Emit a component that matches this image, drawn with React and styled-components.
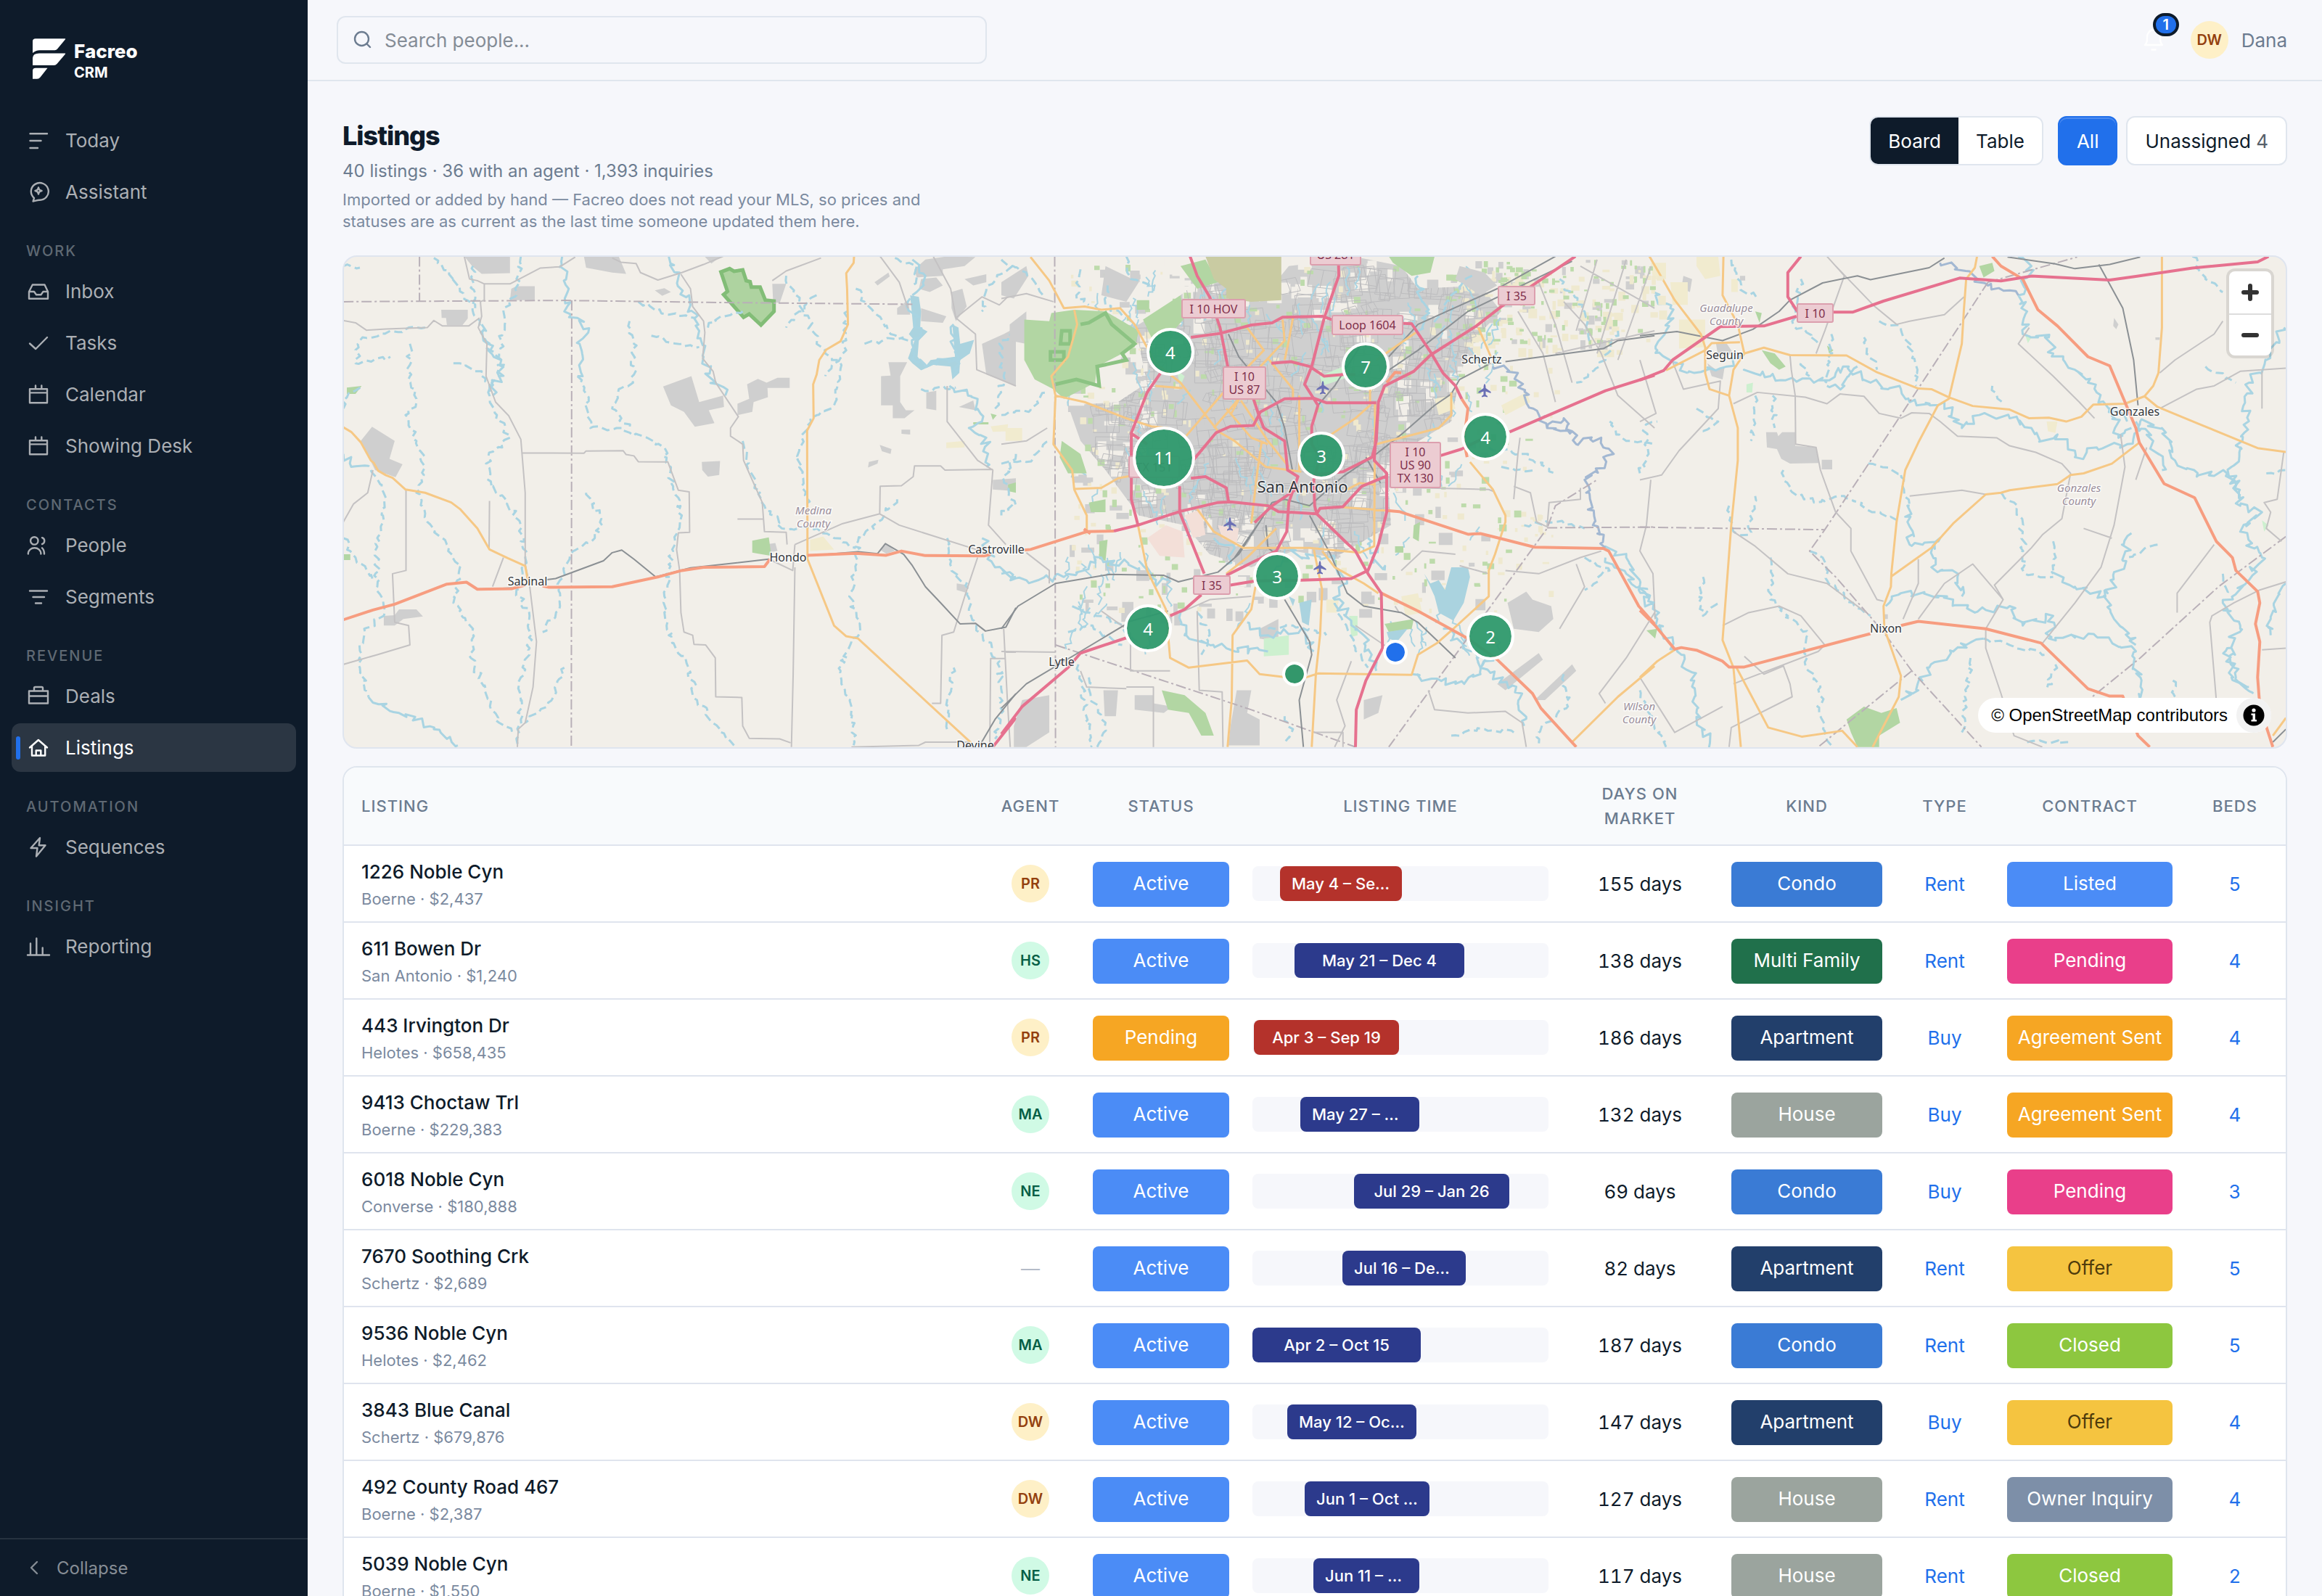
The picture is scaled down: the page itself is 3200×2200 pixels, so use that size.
import React from 'react';
import { useState } from 'react';
import styled, { createGlobalStyle } from 'styled-components';

const GlobalStyle = createGlobalStyle`
  * {
    box-sizing: border-box;
  }
  body {
    margin: 0;
    background: #f6f7fb;
    color: #0e1b2a;
    font-family: Inter, 'Liberation Sans', sans-serif;
    font-size: 26px;
  }
  button, input {
    font: inherit;
    color: inherit;
  }
  a {
    color: inherit;
    text-decoration: none;
  }
`;

/* ---------- shell ---------- */

const Shell = styled.div`
  display: grid;
  grid-template-columns: 424px minmax(0, 1fr);
  grid-template-rows: minmax(0, 1fr);
  height: 100vh;
  overflow: hidden;
`;

const Sidebar = styled.aside`
  display: flex;
  flex-direction: column;
  min-height: 0;
  background: #0e1b2a;
  color: #abafb4;
`;

const Brand = styled.a`
  display: flex;
  flex: none;
  align-items: flex-start;
  gap: 10px;
  height: 160px;
  padding: 48px 44px 0;
  color: #fff;
`;

const BrandName = styled.span`
  display: flex;
  flex-direction: column;
  padding-top: 8px;
  font-size: 26px;
  font-weight: 800;
  line-height: 30px;
`;

const BrandSub = styled.span`
  font-size: 20px;
  font-weight: 700;
  line-height: 28px;
`;

const Nav = styled.nav`
  display: flex;
  flex: 1;
  flex-direction: column;
  gap: 4px;
  min-height: 0;
  padding: 0 16px;
`;

const NavLabel = styled.div`
  padding: 32px 20px 6px;
  font-size: 20px;
  font-weight: 500;
  line-height: 24px;
  letter-spacing: 2px;
  color: #5f6973;
`;

const NavItem = styled.a`
  position: relative;
  display: flex;
  align-items: center;
  gap: 20px;
  height: 67px;
  padding: 0 20px;
  border-radius: 12px;
  background: ${({ $active }) => ($active ? '#2b3643' : 'transparent')};
  color: ${({ $active }) => ($active ? '#fff' : 'inherit')};

  &::before {
    content: '';
    display: ${({ $active }) => ($active ? 'block' : 'none')};
    position: absolute;
    left: 6px;
    width: 6px;
    height: 32px;
    border-radius: 3px;
    background: #2170eb;
  }
`;

const Collapse = styled.button`
  display: flex;
  flex: none;
  align-items: center;
  gap: 20px;
  height: 80px;
  padding: 0 36px;
  border: 0;
  border-top: 2px solid #26323f;
  background: none;
  color: #868d95;
  font-size: 24px;
`;

const Main = styled.main`
  display: flex;
  flex-direction: column;
  min-width: 0;
  min-height: 0;
`;

const TopBar = styled.header`
  display: flex;
  flex: none;
  align-items: center;
  justify-content: space-between;
  height: 112px;
  padding: 0 48px 0 40px;
  border-bottom: 2px solid #e0e6ee;
`;

const SearchBox = styled.label`
  display: flex;
  align-items: center;
  gap: 16px;
  width: 896px;
  height: 66px;
  padding: 0 20px;
  border: 2px solid #e0e6ee;
  border-radius: 12px;
  color: #6c7c90;
`;

const SearchInput = styled.input`
  flex: 1;
  padding: 0;
  border: 0;
  outline: 0;
  background: none;

  &::placeholder {
    color: #848c96;
    opacity: 1;
  }
`;

const UserArea = styled.div`
  display: flex;
  align-items: center;
  color: #6c7c90;
`;

const BellButton = styled.button`
  position: relative;
  display: flex;
  align-items: center;
  justify-content: center;
  width: 44px;
  height: 44px;
  margin-right: 28px;
  padding: 0;
  border: 0;
  background: none;
  color: #fff;
`;

const BellCount = styled.span`
  position: absolute;
  top: -15px;
  left: 20px;
  display: flex;
  align-items: center;
  justify-content: center;
  width: 36px;
  height: 32px;
  border: 4px solid #0e1b2a;
  border-radius: 16px;
  background: #2170eb;
  font-size: 20px;
  font-weight: 600;
`;

const avatarTones = {
  amber: ['#fef0c7', '#93400e'],
  mint: ['#d0fae5', '#065f46'],
};

const Avatar = styled.span`
  display: inline-flex;
  align-items: center;
  justify-content: center;
  width: 52px;
  height: 52px;
  border-radius: 50%;
  background: ${({ $tone }) => avatarTones[$tone][0]};
  color: ${({ $tone }) => avatarTones[$tone][1]};
  font-size: 20px;
  font-weight: 600;
  vertical-align: middle;
`;

const UserName = styled.span`
  margin-left: 18px;
`;

/* ---------- page ---------- */

const Page = styled.div`
  flex: 1;
  min-height: 0;
  padding: 48px 48px 0;
  overflow: hidden;
`;

const PageHead = styled.div`
  display: flex;
  align-items: flex-start;
  justify-content: space-between;
  margin-bottom: 32px;
`;

const Title = styled.h1`
  margin: 0 0 2px;
  font-size: 36px;
  font-weight: 800;
  line-height: 54px;
  letter-spacing: -1px;
`;

const Summary = styled.p`
  margin: 0 0 4px;
  font-size: 24px;
  line-height: 40px;
  color: #6c7c90;
`;

const FinePrint = styled.p`
  max-width: 840px;
  margin: 0;
  font-size: 22px;
  line-height: 30px;
  color: #7b8a9f;
`;

const Filters = styled.div`
  display: flex;
  gap: 12px;
`;

const Toggle = styled.div`
  display: flex;
  height: 68px;
  margin-right: 8px;
  overflow: hidden;
  border: 2px solid #e0e6ee;
  border-radius: 12px;
`;

const ToggleButton = styled.button`
  padding: 0 24px;
  border: 0;
  background: ${({ $on }) => ($on ? '#0e1b2a' : '#fff')};
  color: ${({ $on }) => ($on ? '#fff' : '#0e1b2a')};
`;

const FilterButton = styled.button`
  height: 68px;
  padding: 0 24px;
  border: 2px solid ${({ $on }) => ($on ? '#2170eb' : '#e0e6ee')};
  border-radius: 12px;
  background: ${({ $on }) => ($on ? '#2170eb' : '#fff')};
  box-shadow: ${({ $on }) => ($on ? 'inset 0 2px 0 #4d8cf0' : 'none')};
  color: ${({ $on }) => ($on ? '#fff' : '#0e1b2a')};
`;

const FilterCount = styled.span`
  color: #56606a;
`;

/* ---------- map ---------- */

const MapCard = styled.section`
  position: relative;
  height: 680px;
  margin-bottom: 24px;
  overflow: hidden;
  border: 2px solid #dfe5ef;
  border-radius: 20px;
  background: #f2efe9;
`;

const MapCanvas = styled.svg`
  display: block;
  width: 100%;
  height: 100%;
  font-family: 'Noto Sans', sans-serif;
`;

const Marker = styled.button`
  position: absolute;
  display: flex;
  align-items: center;
  justify-content: center;
  width: ${({ $size }) => $size}px;
  height: ${({ $size }) => $size}px;
  padding: 0;
  border: 4px solid #fff;
  border-radius: 50%;
  background: ${({ $color }) => $color};
  background-clip: padding-box;
  color: #fff;
  font-family: 'Noto Sans', sans-serif;
  font-size: 24px;
  transform: translate(-50%, -50%);
`;

const ZoomControls = styled.div`
  position: absolute;
  top: 20px;
  right: 20px;
  display: flex;
  flex-direction: column;
  border-radius: 8px;
  background: #fff;
  box-shadow: 0 0 0 4px rgba(0, 0, 0, 0.1);
`;

const ZoomButton = styled.button`
  display: flex;
  align-items: center;
  justify-content: center;
  width: 58px;
  height: 58px;
  padding: 0;
  border: 0;
  background: none;

  & + & {
    border-top: 2px solid #ddd;
  }
`;

const Attribution = styled.div`
  position: absolute;
  right: 20px;
  bottom: 20px;
  display: flex;
  align-items: center;
  gap: 12px;
  height: 48px;
  padding-left: 18px;
  border-radius: 24px;
  background: #fff;
  color: #000;
  font-family: 'Liberation Sans', Arial, sans-serif;
  font-size: 24px;
`;

const InfoButton = styled.button`
  display: flex;
  align-items: center;
  justify-content: center;
  width: 48px;
  height: 48px;
  padding: 0;
  border: 0;
  border-radius: 50%;
  background: #f2f2f2;
`;

/* ---------- table ---------- */

const TableCard = styled.section`
  overflow: hidden;
  border: 2px solid #dfe5ee;
  border-radius: 20px;
  background: #fff;
`;

const Table = styled.table`
  width: 100%;
  border-collapse: separate;
  border-spacing: 0;
  table-layout: fixed;
`;

const Col = styled.col`
  width: ${({ $width }) => ($width ? `${$width}px` : 'auto')};
`;

const HeadCell = styled.th`
  height: 108px;
  padding: 0 24px;
  border-bottom: 2px solid #dfe4ee;
  background: #f8fafc;
  color: #6c7c90;
  font-size: 22px;
  font-weight: 500;
  line-height: 34px;
  letter-spacing: 1px;
  text-align: ${({ $left }) => ($left ? 'left' : 'center')};
`;

const Cell = styled.td`
  height: 106px;
  padding: 0 ${({ $left }) => ($left ? 24 : 16)}px;
  border-bottom: 2px solid #dfe4ee;
  text-align: ${({ $left }) => ($left ? 'left' : 'center')};
  font-variant-numeric: ${({ $tabular }) => ($tabular ? 'tabular-nums' : 'normal')};
`;

const Address = styled.a`
  display: block;
  padding-top: 2px;
  font-weight: 500;
  line-height: 40px;
`;

const Place = styled.span`
  display: block;
  font-size: 22px;
  line-height: 34px;
  color: #7b8a9f;
`;

const Nobody = styled.span`
  color: #b4bcc8;
`;

const Pill = styled.span`
  display: block;
  height: 62px;
  margin-top: 2px;
  border-radius: 8px;
  background: ${({ $color }) => $color};
  color: ${({ $dark }) => ($dark ? '#4f3c0c' : '#fff')};
  line-height: 60px;
  white-space: nowrap;
`;

const Track = styled.div`
  height: 48px;
  overflow: hidden;
  border-radius: 8px;
  background: #f6f7fb;
`;

const Span = styled.div`
  height: 48px;
  padding: 0 ${({ $short }) => ($short ? 16 : 0)}px;
  overflow: hidden;
  border-radius: 8px;
  background: ${({ $late }) => ($late ? '#b4322b' : '#2c3a8c')};
  color: #fff;
  font-size: 22px;
  font-weight: 500;
  line-height: 48px;
  text-align: ${({ $short }) => ($short ? 'left' : 'center')};
  white-space: nowrap;
`;

const CellLink = styled.a`
  color: #2170eb;
`;

/* ---------- icons ---------- */

const iconPaths = {
  today: 'M5.5 7.2H29M5.5 17H20.5M5.5 27H16',
  assistant:
    'M9.6 29.6L11 24.9A12 11.8 0 1 1 18 27.7C15 27.8 12.5 29.2 9.6 29.6ZM17 10.5Q17.6 14.4 21.5 15Q17.6 15.6 17 19.5Q16.4 15.6 12.5 15Q16.4 14.4 17 10.5Z',
  inbox: 'M8.8 7.5H25.5L30 17V26.8H4V17ZM4 17H11L14 21.2H20.5L23.5 17H30',
  tasks: 'M5 17.5L13.2 25L29 9',
  calendar: 'M5 9.2H29V28.2H5ZM5 14.4H29M13 4.5V9M21.3 4.5V9',
  people:
    'M16.5 10.4A5.2 5.2 0 1 1 6.1 10.4A5.2 5.2 0 1 1 16.5 10.4M2.8 28.5C3 17.5 20.2 17.5 20.4 28.5M22 6.2A4.6 4.6 0 0 1 22 15M22 20.3C24 22 25 25 25 28.5',
  segments: 'M5 8.5H29M9.5 17H25M13 25.5H21',
  deals: 'M4 9.5H30V26.5H4ZM4 16.5H30M11 9V5.5Q11 4 12.5 4H21.5Q23 4 23 5.5V9',
  home: 'M5 16.5L16.9 6L29 16.5M8 14.5V27.5H26.2V14.5M13.7 27V20.5H20.3V27',
  bolt: 'M19 4L6.5 18H15.5L14 29.5L26.5 14.2H17.7Z',
  chart: 'M2 28.5H32M6 28V12.5M14.3 28V5.5M22.7 28V18.5',
};

const Icon = ({ name }) => (
  <svg width="34" height="34" viewBox="0 0 34 34" fill="none" stroke="currentColor" strokeWidth="2.4" strokeLinecap="round" strokeLinejoin="round" aria-hidden="true">
    <path d={iconPaths[name]} />
  </svg>
);

const Logo = () => (
  <svg width="48" height="64" viewBox="0 0 48 64" fill="#fff" aria-hidden="true">
    <path d="M1 25V9Q1 5.3 5 5.3H45.5Q46.8 5.3 45.8 6.5L35 19.5Q33.6 21.3 31.5 21.3H11Q5 21.5 1 25Z" />
    <path d="M1 42V32Q1.5 25.6 10 25.6H45.5Q46.8 25.6 45.8 26.8L34.5 40Q32.8 42 30.5 42H1Z" />
    <path d="M1 60.8V49Q1.5 45.8 5 45.8H21.5L11.5 58.5Q9.8 60.8 7 60.8Z" />
  </svg>
);

/* ---------- map drawing ---------- */

// small seeded generator so the drawing is the same on every render
const seeded = (seed) => () => {
  seed = (seed * 16807) % 2147483647;
  return seed / 2147483647;
};

const parse = (line) => line.split(' ').map((p) => p.split(',').map(Number));

const straight = (line) => 'M' + line.split(' ').join('L');

// turns a coarse line into a winding creek
const meander = (line, seed, amp = 9) => {
  const rand = seeded(seed * 7919 + 13);
  const pts = parse(line);
  let d = `M${pts[0][0]} ${pts[0][1]}`;
  for (let i = 1; i < pts.length; i++) {
    const [x0, y0] = pts[i - 1];
    const [x1, y1] = pts[i];
    const steps = Math.max(2, Math.round(Math.hypot(x1 - x0, y1 - y0) / 11));
    for (let s = 1; s <= steps; s++) {
      const t = s / steps;
      const j = s === steps ? 0 : amp;
      d += `L${Math.round(x0 + (x1 - x0) * t + (rand() - 0.5) * j * 2)} ${Math.round(y0 + (y1 - y0) * t + (rand() - 0.5) * j * 2)}`;
    }
  }
  return d;
};

const west = {
  urban: [
    '300,30 405,30 405,82 340,84 318,60', '575,30 655,30 672,84 640,80 580,65', '420,122 462,122 462,165 405,165 408,130',
    '247,195 308,195 308,222 296,242 260,242 258,220 248,220', '88,556 140,600 128,655 158,672 142,712 95,690 62,600',
    '757,432 822,400 840,480 895,460 897,495 862,505 875,545 830,556 805,510 775,490',
    '950,425 975,408 995,420 1020,405 1048,405 1048,436 997,436 998,465 965,480 962,510 928,520 928,485 955,470',
    '1275,357 1318,357 1302,400 1302,480 1315,505 1335,505 1312,530 1285,530 1285,490 1258,490 1258,400 1280,398',
    '1362,450 1385,445 1385,505 1362,500', '1490,300 1540,270 1568,250 1568,430 1500,395', '846,665 888,662 886,705 860,710 847,690',
    '1360,40 1410,30 1475,32 1450,60 1400,70 1400,90 1340,95 1335,70', '1350,100 1385,95 1400,120 1370,140 1345,130',
    '1420,140 1445,130 1455,185 1430,230 1420,190', '1450,100 1500,85 1500,110 1470,120', '1350,190 1408,215 1400,235 1350,230',
    '115,1140 140,1138 150,1120 190,1120 205,1142 160,1150 140,1170 115,1170', '1008,115 1040,115 1025,175 1010,170',
    '1437,495 1470,475 1475,505', '1243,110 1275,80 1278,92 1250,120', '1295,190 1320,165 1325,210 1295,210', '738,135 760,128 775,140 755,152',
    '1305,565 1325,565 1325,580 1305,578', '1255,612 1282,625 1280,640 1260,632', '1230,665 1252,658 1250,670 1228,682', '1515,720 1568,715 1568,755 1515,750',
    '852,30 890,30 868,52', '1255,935 1270,917 1290,940 1270,948', '1432,1040 1455,1045 1452,1068 1432,1060', '990,920 1015,915 1020,940 995,945',
  ],
  wood: ['962,908 1000,898 1006,955 962,945', '22,950 38,950 38,968 22,968', '1470,542 1505,542 1505,549 1470,549', '30,435 64,430 50,455 30,455', '1510,515 1524,520 1515,535', '1550,735 1568,728 1568,760 1550,755'],
  farm: ['1408,605 1450,600 1450,620 1408,622', '1095,905 1125,895 1150,935 1095,940', '1510,555 1550,548 1548,570 1515,572'],
  lake: ['1325,150 1345,155 1350,200 1348,250 1365,262 1345,290 1342,340 1360,370 1372,350 1400,345 1428,340 1422,240 1436,250 1440,300 1472,288 1462,330 1440,350 1438,390 1422,410 1418,370 1378,365 1350,382 1330,360 1320,345 1335,290 1322,270 1332,250'],
  motorway: ['1568,1455 1515,1545'],
  trunk: ['22,1152 90,1122 140,1104 260,1042 305,1036 330,1058 410,1056 440,1045', '480,1048 495,1052 640,1050 745,1020 800,1000 850,990 990,988 1003,965', '1089,953 1200,947 1270,953 1305,940 1360,954 1495,955 1510,950'],
  primary: [
    '22,558 40,572 62,604 85,660 92,668 102,692 120,706 135,714 165,750 210,760 270,790 290,810 330,870 358,935 400,962 440,986 448,1045',
    '1196,30 1195,50 1178,82 1180,130 1182,240 1165,292 1132,318 1116,350 1110,395 1102,425 1103,530 1088,568 1089,965 1150,1170 1178,1203 1205,1210 1465,1532',
  ],
  minor: [
    '300,30 312,100 330,105 346,115 405,115 475,66 520,62 555,32',
    '346,115 346,165 337,170 340,215 332,250 352,300 350,400 372,480 402,522 430,595 440,760 440,980 450,1045 466,1220 458,1360 440,1470 424,1490 422,1545',
    '432,637 575,638 580,631 665,630 672,642 690,646 700,664 768,665 792,752 817,757 818,882 792,884 788,935 795,1000 798,1130 805,1190 825,1200 828,1228 855,1230 877,1270 878,1390 938,1392 940,1480 955,1518 1025,1520 1050,1532',
    '640,35 660,48 695,52 705,80 745,103 800,80 850,55 895,30',
    '798,85 820,130 825,185 850,230 853,265 848,345 872,385 878,420 930,525 912,560 912,585 940,610 942,660 965,730 985,790 990,880 1040,882 1042,920',
    '1060,990 1056,1320 1052,1545', '1060,920 1110,890 1170,855 1255,825 1256,740 1305,738 1332,710 1335,677 1395,677 1405,690 1515,688',
    '1255,825 1300,860 1500,945', '22,228 50,235 75,258 120,254 215,250 230,228 250,245 310,245 335,220',
    '166,750 166,1000 135,1010 140,1160 172,1170 175,1230 100,1260 22,1290', '22,850 45,795 78,760 90,690', '358,785 357,930',
    '1256,30 1300,110 1320,190', '1568,1252 1545,1252', '1542,1272 1510,1272 1508,1545', '1480,960 1455,1060 1425,1190 1398,1200 1395,1410 1375,1410',
    '1190,1545 1345,1540 1360,1530 1460,1530', '1378,30 1418,130 1430,220 1475,270 1478,380 1568,430', '1430,220 1490,155 1530,180 1568,130',
    '1410,430 1410,540 1480,660 1515,690 1505,860 1545,920', '928,841 988,841', '1008,105 1040,75 1120,35', '365,1050 390,960', '1000,965 1055,1000 1060,920', '1540,1180 1548,1390 1555,1545',
  ],
  rail: [
    '22,1152 90,1122 140,1104 260,1042 305,1036 330,1058 410,1054', '490,1028 510,1025 620,970 640,945 662,937 690,965 740,1020 820,992 1000,965',
    '1089,955 1205,942 1250,948 1268,917 1310,950 1330,985 1360,1050 1395,1100 1440,1165 1475,1163 1498,1187 1545,1175 1568,1115', '1568,1380 1520,1460 1485,1540',
  ],
  county: ['22,170 530,166 860,172 1330,178', '197,30 197,168', '547,166 546,1545'],
  creek: [
    '230,35 265,85 300,150 325,190', '430,30 420,150 390,200 385,290 380,340', '320,60 320,180 335,240 360,320 385,350 380,400 355,450 375,520 405,590 355,650 355,720 400,790 430,860 440,960 420,1060 450,1140 450,1240 430,1330 430,1460 420,1545',
    '560,400 578,450 590,560 650,560 720,590 760,620 780,740 800,830 780,940 760,1080 770,1200 810,1280 835,1400 870,1470 920,1540',
    '680,230 690,300 688,420 655,440 640,500 680,560', '175,300 175,400 190,480 165,520 190,600 210,680 190,760 215,850 260,920 290,990 275,1100 320,1180 315,1270 350,1370 380,1470 410,1500',
    '210,250 130,260 60,290 50,360 130,340', '22,500 35,450 64,430', '85,690 120,780 100,900 100,1050 115,1140 70,1180 60,1300 80,1390',
    '580,760 615,840 600,900 550,940 520,1030 520,1110 480,1190', '530,1300 505,1390 440,1470', '1040,90 1070,170 1100,260 1130,330 1165,360 1150,490 1095,530 1070,620 1075,740 1090,790',
    '1200,130 1240,200 1280,270 1320,290', '1220,300 1310,280', '940,600 960,700 990,800 1030,870 1110,870 1150,900 1200,930', '1295,780 1250,850 1205,910 1200,1000 1185,1080 1210,1180 1180,1250 1165,1310 1190,1430 1195,1540',
    '1410,900 1420,990 1460,1060 1465,1140 1500,1220 1530,1280 1535,1440 1520,1520', '1425,1300 1410,1400 1415,1500', '1568,640 1540,720 1568,800', '700,170 770,210 830,220', '730,275 800,300 840,310', '275,360 340,385 360,450',
    '1350,440 1430,435', '1110,150 1070,200 1040,250', '1180,200 1170,330 1130,400', '22,60 60,65', '22,900 50,960 90,1030', '860,250 890,215 940,200', '1290,35 1340,60 1330,120', '1560,60 1500,130 1490,200', '1568,260 1530,300 1540,400 1520,500',
  ],
  river: [
    '525,30 540,130 530,200 560,220 585,265 565,300 560,400', '80,1390 150,1440 230,1490 285,1540', '22,640 40,680 80,675', '770,30 795,80 820,180 840,260 850,340 870,420 900,460',
    '1415,430 1480,470 1490,540 1460,560 1500,590 1500,680', '1490,900 1520,990 1568,1020', '340,240 360,320 385,350 380,400 365,460', '1330,40 1360,90 1330,150',
    '1325,160 1340,250 1335,330 1360,365 1430,350', '1425,240 1432,320 1425,400',
  ],
};

const centre = {
  urban: [
    '50,1400 115,1385 115,1500 60,1545 30,1545 30,1480', '245,1370 280,1370 275,1450 248,1450', '320,1385 365,1385 365,1410 410,1420 390,1440 320,1430', '565,1370 600,1370 590,1440 620,1460 620,1540 545,1540 550,1480',
    '1215,1100 1260,1065 1275,1090 1320,1110 1325,1150 1290,1190 1230,1180', '1190,1350 1290,1255 1300,1275 1210,1370', '1280,1400 1370,1290 1380,1310 1305,1400',
    '870,1400 915,1385 905,1440 870,1460', '620,1180 665,1150 665,1220 620,1210', '1100,60 1160,80 1190,120 1150,150 1090,100', '0,110 60,60 65,90 30,160 0,150', '20,240 60,200 60,300 20,290', '250,60 330,110 300,170 240,150',
  ],
  wood: [
    '55,225 115,230 120,205 175,195 250,200 330,260 320,310 230,370 225,420 150,470 125,440 80,410 55,350', '145,600 190,640 205,700 160,700 140,650', '930,30 1040,30 1030,80 985,90 940,50',
    '325,165 355,165 355,195 325,195', '340,225 430,150 440,220 400,280 360,280', '210,790 250,780 250,820 215,820', '385,1370 440,1385 490,1440 510,1510 480,1510 450,1440 400,1430', '920,1165 990,1150 985,1180 930,1190',
    '990,860 1005,850 1002,910 988,900', '235,910 255,905 250,970 235,965', '945,925 965,925 965,945 945,945', '430,60 490,40 520,110 470,130',
  ],
  pale: ['630,1210 690,1200 690,1260 630,1265', '835,1140 855,1140 855,1200 840,1205', '765,400 820,370 840,400 770,430', '420,380 440,400 430,430'],
  farm: ['960,1080 1000,1070 1010,1130 970,1140', '1200,490 1260,450 1270,480 1210,520', '10,560 50,560 50,600 10,600', '780,1090 810,1090 805,1130 780,1130', '1040,470 1080,460 1090,500 1050,520'],
  base: ['350,900 395,860 435,880 440,960 380,955', '440,830 480,810 490,890 460,900', '520,860 570,870 565,920 530,900'],
  lake: ['1015,1010 1030,1040 1050,1030 1065,1060 1080,990 1120,990 1125,1020 1110,1100 1085,1155 1050,1130 1040,1080', '715,1100 745,1090 738,1170 722,1160', '925,1190 975,1180 950,1220 930,1210', '690,1080 705,1090 700,1110'],
  motorway: [
    '809,30 810,90 775,220 745,370 728,425 760,490 745,555 745,610 765,650 750,720 752,800 757,825 825,910 850,940 880,1010 912,1070 915,1240 875,1340 852,1430 850,1545',
    '453,30 470,90 500,155 525,250 545,380 600,450 618,520 630,560 680,600 687,690 712,710 690,790 685,880 660,940 610,970 540,1015',
    '1378,30 1280,115 1200,185 1140,245 1030,335 990,385 920,430 905,480 900,600 890,650 820,695 750,705', '385,385 350,450 312,575 312,780 328,860',
    '455,280 525,268 600,242 650,235 675,218 770,215 800,228 985,238 1030,325 1060,390 1090,430 1105,470', '310,575 350,610', '460,660 515,575 550,555 605,552 622,510 680,470 750,468 780,482 900,482',
    '455,715 490,710 540,745 545,785', '428,740 428,820 487,1010', '550,1045 610,1032 720,1030 840,1025 880,1000 905,920 925,820 925,700 895,660 905,480', '648,360 695,355 740,370 775,400 820,395 850,395',
    '270,878 328,860 428,818 520,790 550,788 640,800 665,818 757,825 765,808 820,803 865,740 925,708', '1055,645 1105,625 1160,590', '1220,572 1450,445 1568,397',
    '480,1075 440,1120 405,1140', '300,1208 190,1255 160,1300 50,1420 0,1505', '608,852 650,800 712,745',
  ],
  trunk: [
    '55,937 70,935 205,880 270,878', '1105,470 1120,500 1110,600 1118,650', '925,815 955,818 1120,888 1150,886 1210,905 1280,928 1445,932 1458,940 1530,1110 1568,1165',
    '912,1070 1000,1125 1120,1210 1190,1275 1275,1380 1295,1425 1380,1545', '925,420 945,388 960,390', '198,872 214,886',
  ],
  primary: [
    '70,32 115,105 150,190 200,185 240,195 285,190 320,240 370,360 430,420 520,570 560,600 635,680 720,695', '175,195 182,240 160,340 120,400 130,460 125,610 170,690 175,750 205,830 205,880',
    '130,460 200,480 300,530 360,555 400,560', '175,748 240,745 280,715 310,708', '328,860 350,1000 395,1120 405,1270 450,1300 590,1278 620,1320 720,1335 760,1318 985,1322 1000,1260 1045,1225 1085,1180 1170,1080 1170,1000 1185,950 1210,850 1210,830 1180,750 1125,665',
    '590,250 630,320 540,440 480,530 440,590', '675,225 680,290 640,345 600,400 550,520', '640,345 700,440 700,470', '700,220 690,290 680,350', '715,460 715,690', '470,810 510,880 580,930 740,930 860,945 895,925 897,480',
    '600,855 615,690 625,600', '540,500 600,590 640,610', '570,470 510,560', '575,475 640,600 690,680', '750,935 770,1060 765,1200 755,1320 745,1545', '660,870 590,960 540,1010', '610,1050 600,1120 555,1200 553,1400 543,1545',
    '905,1070 870,1040 800,990 770,940', '995,265 900,350', '1145,250 1175,340', '885,440 885,490 850,530 780,590', '1080,450 1080,520 1050,560 900,610', '1568,1295 1480,1390 1370,1530', '370,430 435,437', '830,750 860,730 895,735', '820,805 925,815',
  ],
  minor: [
    '0,160 60,145 125,170', '0,610 60,600 110,560', '980,720 1010,745 1170,750 1180,755', '1230,780 1240,640 1245,590', '1230,740 1270,760 1285,850 1310,865 1315,790 1390,780 1390,745', '240,1125 300,1180', '300,1360 365,1360 365,1545',
    '190,1310 205,1360 300,1365', '0,1250 130,1252', '470,1125 475,1370 530,1375 532,1545', '1025,1370 1040,1430 1120,1440 1210,1435 1250,1470 1260,1545', '1568,1130 1500,1270 1435,1380 1450,1410', '945,1110 955,1130', '1210,1000 1290,1010 1390,960 1440,940',
    '60,945 115,1000 115,1040', '800,1545 825,1480 805,1400 840,1280', '1350,170 1400,240 1440,330 1480,460 1568,560', '1290,110 1330,240 1370,420', '1240,200 1300,330 1330,480', '960,1000 1010,940 1090,950', '1100,985 1170,1010',
    '600,1080 500,1090 430,1130', '850,1170 930,1240', '1380,980 1400,1050 1340,1180', '820,1545 820,1500 750,1500', '310,1190 310,1310 405,1310',
    '1390,60 1568,190', '1430,40 1380,260', '1500,40 1430,330', '1560,60 1480,350', '1330,330 1568,260',
  ],
  rail: [
    '0,1180 40,1110 130,1040 260,1012 390,1015 425,1035 520,1005 570,950 620,850 650,790 680,780 740,800 820,710 900,640 960,580 1040,490 1080,455 1100,410 1175,360', '1210,355 1445,315 1480,290 1568,275', '1330,30 1190,130 1000,240 930,340',
    '1370,45 1120,200 1000,320 920,390', '545,270 570,340 660,480 680,560 700,700', '740,830 790,950 830,1070 870,1110 960,1130 1000,1160 1090,1270', '680,1090 740,1220 745,1260 715,1400 725,1545', '300,1165 190,1250 60,1350 0,1425', '300,1160 400,1125',
    '860,310 800,430 760,490', '635,860 640,930 660,950', '875,650 910,730', '620,850 560,960',
  ],
  county: ['128,30 130,1545', '130,1230 600,1430 850,1545', '930,1545 1310,870 1330,800 1430,720', '1310,868 1568,866'],
  creek: [
    '0,40 60,80 100,150', '190,70 180,150 210,180', '255,120 250,180 300,220', '0,520 70,505 110,450', '0,670 60,665 120,600', '170,1110 260,1150 330,1230', '160,1190 210,1170 290,1230', '210,1330 215,1400 250,1470 230,1545', '185,1290 200,1400 215,1545',
    '640,1180 700,1170 780,1200', '800,1100 850,1240 880,1300', '1080,1510 1160,1490 1230,1500', '1350,1320 1360,1420 1290,1500 1290,1545', '1170,620 1250,640 1330,700', '1200,680 1280,690', '1460,540 1500,600 1568,610', '1255,860 1330,850 1400,870', '1400,960 1460,1000 1400,1060',
    '940,700 1000,740', '1480,260 1450,350 1380,420', '1340,100 1400,200 1420,300', '0,830 30,790', '470,1130 500,1200 480,1260', '300,30 310,100 370,120', '1130,90 1080,150 1040,240', '680,1450 700,1490 680,1530',
  ],
  river: [
    '0,1010 60,1030 150,1020 210,990 240,960 330,990', '330,970 370,1040 400,1030', '430,1130 440,1200 540,1240 640,1250', '590,1160 640,1200 720,1180 750,1250', '690,930 720,960 800,960 830,1040 800,1090 870,1200 900,1310', '880,900 890,960 920,1000',
    '1450,960 1500,1010 1550,1060', '1180,1270 1150,1300 1250,1380 1255,1480', '985,1320 1090,1350 1150,1320 1180,1270', '1120,1220 1150,1300', '1000,90 1020,200 1000,260', '1060,1180 1130,1250', '510,900 560,930 540,980',
    '1450,930 1500,960 1530,1060 1568,1100',
  ],
  bound: ['1180,370 1240,390 1260,480 1310,560 1370,570 1380,610 1440,590 1470,640 1400,720 1420,860 1450,930', '1310,560 1350,530 1370,570'],
};

const east = {
  urban: [
    '290,573 315,573 318,585 327,573 357,573 357,615 405,620 412,668 345,670 325,655 315,625 292,620', '418,658 442,658 442,688 418,688', '175,300 200,300 215,330 180,340', '155,360 175,380 195,370 190,410 165,400', '230,90 242,90 242,105 230,105', '1090,220 1100,240 1095,255 1088,245',
    '100,90 120,100 115,140 95,130', '1185,280 1195,280 1195,288 1185,288', '560,1135 570,1135 570,1150 560,1150',
  ],
  wood: ['780,60 810,50 815,75 790,95', '475,1460 515,1420 555,1440 590,1425 598,1470 550,1510 550,1545 500,1545 485,1500', '280,320 310,330 335,370 320,380 300,360', '15,1185 40,1180 35,1210', '265,200 280,205 275,235', '430,305 445,320 435,330'],
  pale: ['245,425 260,420 258,450 245,450', '885,270 900,280 892,298', '1430,845 1445,860 1435,880'],
  farm: ['25,50 60,50 60,100 30,100', '130,30 180,30 185,90 150,100 130,60', '90,225 150,225 150,310 90,315', '70,110 110,110 110,180 75,180', '935,540 960,540 955,575 938,570', '210,100 225,100 225,140 210,140'],
  motorway: ['0,412 55,382 75,350 185,247 285,245 360,215', '370,30 340,80 340,155 362,200', '445,202 490,202 560,168 735,97 830,106 900,91 1080,103 1140,92 1270,66 1420,47 1445,30'],
  trunk: [
    '810,30 830,60 880,100 915,195 960,245 1030,340 1080,368 1115,480 1140,560 1148,605 1205,732 1275,775 1325,910 1362,960 1370,1000 1420,1065 1425,1100 1415,1165 1425,1220 1420,1330 1425,1420 1455,1545',
    '0,1123 35,1170 80,1243 95,1238 130,1246 190,1280 205,1298 240,1298 530,1195', '600,1170 640,1157 795,1180 922,1224 1030,1365 1080,1388 1110,1388 1145,1510 1172,1545',
  ],
  primary: [
    '22,30 80,165 140,270 150,310 150,390 160,440 205,460 225,560 225,660 210,860 190,1215 215,1300 232,1545', '222,1300 295,1485 372,1513 465,1495 500,1545', '0,1330 40,1280 80,1245', '192,30 190,150 225,240 240,330 215,380 205,460', '60,382 150,320 165,298 230,295',
    '240,330 285,312 345,335 475,336 545,388 640,438 670,440 710,465 765,492 850,503 895,530 940,528 980,540 1015,525 1042,488 1115,485 1160,462 1190,495 1290,550 1420,622 1485,634',
    '775,30 770,65 750,100 745,190 740,300 710,470 685,490 640,605 610,690 590,850 578,1010 577,1050 560,1110 562,1180 600,1325 595,1390 535,1545', '1200,30 1200,250 1192,390 1180,430 1160,462',
    '578,1018 670,930 720,855 795,765 830,760 850,752 960,733 990,705 1020,700 1085,670 1148,605', '1485,1455 1455,1510',
  ],
  minor: [
    '0,350 37,515 0,540', '0,720 50,705 90,630 180,500 185,415 100,440 75,355', '25,720 15,860 0,940 30,1010 35,1150',
    '215,485 270,450 380,465 430,485 460,455 515,462 550,515 600,530 625,513 665,515 690,540 730,585 820,590 850,615 910,635 970,670 990,700 970,840 925,890 900,930 815,1045 835,1090 795,1180 795,1240 830,1380 860,1510 925,1545',
    '450,60 540,185 590,240 620,230 700,210 745,155', '345,335 348,380 357,460 358,610 405,620 415,690 450,820 485,870 485,940 545,1090 560,1095', '895,250 870,300 950,400 1010,480 1045,530', '1105,580 1115,680 1090,860 1060,990 1000,1100 925,1225',
    '620,770 740,752 795,765', '215,880 265,925 340,1010 430,1040 520,1130', '1485,375 1380,385 1320,430 1280,440 1230,475 1195,500', '1195,390 1230,350 1320,270 1340,230', '1485,1035 1425,1060 1365,1100 1315,1140 1310,1160 1325,1400',
    '1480,635 1465,780 1435,790 1450,820 1440,870 1475,910', '190,1170 250,1130 320,1110 370,1140 425,1230 410,1250 215,1350', '240,1265 285,1320 330,1295 345,1350 350,1390 210,1485 205,1545', '1430,385 1430,500', '640,965 640,1040 605,1150', '640,1150 700,1040 765,980 835,1090',
    '1320,920 1235,1070 1235,1130', '1020,870 1085,900', '430,30 470,90 425,260 405,330', '0,1330 80,1500 190,1420', '1485,1240 1430,1245', '1165,620 1140,720',
  ],
  rail: ['0,275 85,262 190,290 260,255 320,200 345,165 420,112 500,90 530,102 665,65 700,35', '845,32 955,53 1000,68 1080,55 1150,32', '1055,55 1110,190 1135,350 1145,490', '1485,1490 1455,1530'],
  county: ['0,866 425,874', '800,110 600,520 425,874 390,940 450,1020 560,1190 625,1310 785,1545', '625,1310 460,1490 410,1545', '800,110 1005,32', '1485,895 1330,1050 1150,1270 1040,1390'],
  creek: [
    '210,40 230,130 270,160', '525,670 600,700 620,800', '330,690 345,750 400,790 470,770 540,820 600,850', '205,800 215,880 250,890 265,770', '390,940 420,960 430,1030 490,1100 530,1140', '300,960 300,1090 350,1150 385,1200 380,1290 415,1360 415,1450 440,1540',
    '550,230 600,250 630,330 635,430', '0,700 20,640 10,560 40,540', '130,500 180,540 140,570', '145,1020 135,1100 145,1140 185,1100', '1190,920 1120,960', '830,760 860,790 880,880 885,1010 950,1020', '950,910 950,1000', '760,1270 750,1400 740,1500', '790,1210 850,1230 930,1260',
    '955,1290 935,1370', '265,460 255,600', '305,460 310,560', '370,360 390,400', '810,430 835,490', '1300,370 1370,420', '1340,1010 1350,1080', '1270,30 1300,100 1340,140', '1440,700 1485,690', '0,1370 60,1545', '370,100 350,230 410,300', '515,280 545,380', '890,1530 990,1530', '1225,1340 1230,1390', '440,270 430,420',
  ],
  river: [
    '870,30 900,60 870,150', '870,150 890,200 880,270 940,280 950,330 1000,380 1050,450 1080,500 1120,540', '240,380 300,400 400,420 480,370 530,420 600,440 620,480 700,480 740,560 780,520 850,530 900,560 920,600 960,580 1000,650 1050,620 1120,610 1150,540 1200,560 1230,660 1280,710 1350,700 1380,780',
    '1480,250 1440,350 1400,420 1385,600 1360,680 1380,800 1430,820 1380,880 1430,960 1400,1030 1340,1100 1380,1180 1350,1240 1360,1330 1410,1380', '620,800 620,920 690,900 670,990 730,1020 740,1080',
    '565,1110 600,1070 720,1090 770,1130 850,1110 880,1170 950,1140 940,1210 1050,1205 1140,1250 1150,1400', '1130,885 1110,970 1070,1080 1000,1050 950,1010', '1070,1080 1090,1150 1140,1230', '790,1210 720,1250 660,1300 640,1370 600,1400', '1485,1040 1450,1150 1450,1200',
    '0,1050 40,1150 60,1210 95,1260 125,1340 130,1440 160,1545', '30,140 70,190 60,260 40,320 110,390', '110,390 200,370 240,330',
    '1085,500 1100,590 1130,560', '1140,540 1180,600 1200,690', '500,370 470,430 430,430', '1360,1240 1370,1330 1400,1360',
  ],
  bound: ['690,50 760,80 800,120 870,150'],
};

const cityOutline =
  '200,250 330,240 380,200 450,130 560,90 620,170 690,60 860,34 960,60 1000,130 1150,120 1200,200 1130,290 1100,400 1080,540 950,640 930,760 935,860 800,960 700,940 600,990 500,950 440,860 330,830 250,690 190,600 160,490 280,480 350,420 330,300';

const patch = (x, y, w, h) => `M${x | 0} ${y | 0}h${w | 0}v${h | 0}h${-w | 0}z`;

// blocks, parks and street grids of the built-up area
const buildCity = () => {
  const rand = seeded(4242);
  const out = { holes: '', wood: '', farm: '', urban: '', streets: '', creeks: '' };
  for (let i = 0; i < 260; i++) {
    const a = rand() * Math.PI * 2;
    const r = 300 + rand() * 290;
    const x = 640 + Math.cos(a) * r;
    const y = 500 + Math.sin(a) * r * 1.05;
    if (y < 34 || y > 1100) continue;
    out.holes += patch(x, y, 8 + rand() * 30, 10 + rand() * 36);
  }
  for (let i = 0; i < 230; i++) {
    out.wood += patch(180 + rand() * 1080, 40 + rand() * 1080, 5 + rand() * 14, 6 + rand() * 18);
    out.farm += patch(150 + rand() * 1180, 60 + rand() * 1080, 5 + rand() * 12, 6 + rand() * 16);
    out.urban += patch(160 + rand() * 1000, 40 + rand() * 1100, 8 + rand() * 26, 10 + rand() * 30);
  }
  // suburbs and fields north-east of the city
  for (let i = 0; i < 100; i++) {
    const x = 1080 + rand() * 480;
    const y = 34 + rand() * 260;
    out.wood += patch(x, y, 4 + rand() * 12, 5 + rand() * 16);
    out.farm += patch(x + 20, y + 30, 6 + rand() * 16, 8 + rand() * 22);
    if (i % 2) out.urban += patch(x - 20, y, 6 + rand() * 18, 8 + rand() * 24);
  }
  for (let i = 0; i < 330; i++) {
    const x = 170 + rand() * 960;
    const y = 60 + rand() * 900;
    const w = 24 + rand() * 70;
    const skew = (rand() - 0.5) * 26;
    out.streets += `M${x | 0} ${y | 0}l${w | 0} ${skew | 0}l${-skew | 0} ${(w * 0.9) | 0}l${-w | 0} ${-skew | 0}zM${(x + w / 2) | 0} ${(y + skew / 2) | 0}l${-skew | 0} ${(w * 0.9) | 0}`;
  }
  for (let i = 0; i < 110; i++) {
    const x = 160 + rand() * 1040;
    const y = 60 + rand() * 1150;
    out.creeks += meander(`${x | 0},${y | 0} ${(x + (rand() - 0.5) * 70) | 0},${(y + 40 + rand() * 60) | 0}`, i + 1, 7);
  }
  return out;
};

const city = buildCity();

const areaColors = { urban: '#cfcfcf', wood: '#b2d6a3', pale: '#cdf0cf', farm: '#f1ebcf', base: '#f3dfd8', lake: '#aad3df' };

const Areas = ({ data }) =>
  Object.keys(areaColors).map((kind) => (data[kind] ? <path key={kind} d={data[kind].map((p) => straight(p) + 'Z').join('')} fill={areaColors[kind]} /> : null));

const lineStyles = [
  ['county', '#b9b0b8', 2, '14 4 3 4'],
  ['minor', '#c4c2c3', 2],
  ['rail', '#8b9094', 2],
  ['primary', '#f6c885', 3],
  ['trunk', '#f79d80', 4],
  ['motorway', '#e6718f', 4],
];

const Lines = ({ data }) => (
  <g fill="none" strokeLinejoin="round" strokeLinecap="butt">
    <path d={data.creek.map((l, i) => meander(l, i + l.length, 7)).join('')} stroke="#a9d4e2" strokeWidth="3" strokeDasharray="11 6" vectorEffect="non-scaling-stroke" />
    <path d={data.river.map((l, i) => meander(l, i + l.length, 12)).join('')} stroke="#a9d4e2" strokeWidth="3" vectorEffect="non-scaling-stroke" />
    {data.bound && <path d={data.bound.map((l, i) => meander(l, i + 3, 12)).join('')} stroke="#a3b8d2" strokeWidth="3" vectorEffect="non-scaling-stroke" />}
    {lineStyles.map(([kind, color, width, dash]) => (
      <path key={kind} d={data[kind].map(straight).join('')} stroke={color} strokeWidth={width} strokeDasharray={dash} vectorEffect="non-scaling-stroke" />
    ))}
  </g>
);

const towns = [
  ['Sabinal', 727, 807], ['Hondo', 1086, 774], ['Castroville', 1373, 763], ['Devine', 1344, 1033], ['Lytle', 1463, 918],
  ['Schertz', 2042, 501], ['Seguin', 2377, 495], ['Gonzales', 2942, 573], ['Nixon', 2599, 872],
];

const counties = [
  ['Medina', 1121, 709], ['Guadalupe', 2379, 430], ['Gonzales', 2865, 678], ['Wilson', 2259, 979],
];

const shields = [
  [1806, 328, 69, 37, ['US 281']], [1629, 413, 87, 25, ['I 10 HOV']], [1836, 435, 97, 26, ['Loop 1604']], [2065, 395, 50, 25, ['I 35']],
  [1686, 506, 58, 44, ['I 10', 'US 87']], [1916, 610, 69, 62, ['I 10', 'US 90', 'TX 130']], [1645, 794, 50, 25, ['I 35']], [2477, 419, 49, 25, ['I 10']], [1556, 629, 69, 29, ['TX 151']],
];

const airports = [[1823, 534], [2046, 538], [1695, 722], [1819, 782]];

const MapDrawing = () => (
  <MapCanvas viewBox="474 354 2676 676" preserveAspectRatio="xMidYMid slice" role="img" aria-label="Map of San Antonio and nearby towns">
    <defs>
      <clipPath id="city">
        <path d={straight(cityOutline) + 'Z'} />
      </clipPath>
    </defs>
    <g transform="translate(460 340) scale(.5995 .4464)">
      <Areas data={west} />
      <path d="M890 78L910 68L920 76L940 72L948 105L957 108L960 125L980 125L992 165L1012 168L1012 200L982 242L955 208L942 218L896 148L905 138Z" fill="#aed3a0" stroke="#82bd77" strokeWidth="5" vectorEffect="non-scaling-stroke" />
      <Lines data={west} />
    </g>
    <g transform="translate(2260 340) scale(.5995 .4464)">
      <Areas data={east} />
      <Lines data={east} />
    </g>
    <g transform="translate(1380 340) scale(.5741 .4464)">
      <path d={straight(cityOutline) + 'Z'} fill="#cfcfcf" />
      <path d={city.urban} fill="#cfcfcf" />
      <path d={city.holes} fill="#f2efe9" />
      <path d={city.farm} fill="#efe9cf" />
      <path d={city.wood} fill="#bddbab" />
      <path d={city.streets} fill="none" stroke="#bcbcbe" strokeWidth="1" vectorEffect="non-scaling-stroke" clipPath="url(#city)" />
      <path d={city.creeks} fill="none" stroke="#a9d4e2" strokeWidth="2" vectorEffect="non-scaling-stroke" />
      <Areas data={centre} />
      <path d="M490 30H672V165L600 170L540 160V130L510 100Z" fill="#c9cba2" />
      <path d="M190 240L210 235L250 205L265 240L320 300L290 330L300 350L230 370L235 430L180 410L130 425M145 260H165V300H142ZM118 325H150V350H118Z" fill="none" stroke="#8cc383" strokeWidth="5" vectorEffect="non-scaling-stroke" />
      <Lines data={centre} />
    </g>
    <g textAnchor="middle" stroke="#fff" strokeOpacity=".7" strokeWidth="3" paintOrder="stroke">
      {towns.map(([name, x, y]) => (
        <text key={name} x={x} y={y} fontSize="16" fill="#33363b">{name}</text>
      ))}
      <text x="1795" y="679" fontSize="22" fill="#33363b">San Antonio</text>
      {counties.map(([name, x, y]) => (
        <text key={name} x={x} y={y} fontSize="15" fontStyle="italic" fill="#9c8f9c">
          {name}
          <tspan x={x} dy="18">County</tspan>
        </text>
      ))}
    </g>
    {shields.map(([x, y, w, h, lines]) => (
      <g key={x}>
        <rect x={x} y={y} width={w} height={h} rx="2" fill="#ecccd2" stroke="#dc9fae" strokeWidth="2" />
        {lines.map((line, i) => (
          <text key={line} x={x + w / 2} y={y + h / 2 + 6 + (i - (lines.length - 1) / 2) * 18 + (h === 37 ? 4 : 0)} fontSize="16" textAnchor="middle" fill="#7f2f4b">{line}</text>
        ))}
      </g>
    ))}
    {airports.map(([x, y]) => (
      <path key={x} transform={`translate(${x} ${y})`} d="M0 -9Q1.5 -8 1.5 -3L8.5 2V4L1.5 1.5V6L4 8V9.5L0 8.5L-4 9.5V8L-1.5 6V1.5L-8.5 4V2L-1.5 -3Q-1.5 -8 0 -9Z" fill="#6a6fb4" />
    ))}
  </MapCanvas>
);

const markers = [
  { x: 1613, y: 485, count: 4 },
  { x: 1882, y: 505, count: 7 },
  { x: 1604, y: 631, count: 11 },
  { x: 1821, y: 628, count: 3 },
  { x: 2047, y: 602, count: 4 },
  { x: 1760, y: 794, count: 3 },
  { x: 1582, y: 866, count: 4 },
  { x: 2054, y: 877, count: 2 },
  { x: 1784, y: 929, color: '#33976b' },
  { x: 1923, y: 899, color: '#2170eb' },
];

const markerSize = (count) => (!count ? 34 : count > 9 ? 86 : 66);

const MapPanel = () => (
  <MapCard>
    <MapDrawing />
    {markers.map((m) => (
      <Marker
        key={`${m.x}-${m.y}`}
        $size={markerSize(m.count)}
        $color={m.color || 'rgba(46, 153, 109, 0.95)'}
        aria-label={m.count ? `${m.count} listings` : 'Listing'}
        style={{ left: `${((m.x - 474) / 2676) * 100}%`, top: `${((m.y - 354) / 676) * 100}%` }}
      >
        {m.count}
      </Marker>
    ))}
    <ZoomControls>
      <ZoomButton aria-label="Zoom in">
        <svg width="28" height="28" viewBox="0 0 28 28" stroke="#333" strokeWidth="6" strokeLinecap="round"><path d="M14 5V23M5 14H23" /></svg>
      </ZoomButton>
      <ZoomButton aria-label="Zoom out">
        <svg width="28" height="28" viewBox="0 0 28 28" stroke="#333" strokeWidth="6" strokeLinecap="round"><path d="M5 14H23" /></svg>
      </ZoomButton>
    </ZoomControls>
    <Attribution>
      <a href="#osm">© OpenStreetMap contributors</a>
      <InfoButton aria-label="About this map">
        <svg width="30" height="30" viewBox="0 0 30 30">
          <circle cx="15" cy="15" r="14.5" fill="#000" />
          <circle cx="15" cy="8" r="2.6" fill="#fff" />
          <path d="M11.5 12.5H17V21H19V23.5H11.5V21H13.5V15H11.5Z" fill="#fff" />
        </svg>
      </InfoButton>
    </Attribution>
  </MapCard>
);

/* ---------- data ---------- */

const navGroups = [
  { items: [['today', 'Today'], ['assistant', 'Assistant']] },
  { label: 'WORK', items: [['inbox', 'Inbox'], ['tasks', 'Tasks'], ['calendar', 'Calendar'], ['calendar', 'Showing Desk']] },
  { label: 'CONTACTS', items: [['people', 'People'], ['segments', 'Segments']] },
  { label: 'REVENUE', items: [['deals', 'Deals'], ['home', 'Listings']] },
  { label: 'AUTOMATION', items: [['bolt', 'Sequences']] },
  { label: 'INSIGHT', items: [['chart', 'Reporting']] },
];

const columns = [
  ['LISTING'], ['AGENT', 140], ['STATUS', 220], ['LISTING TIME', 440], ['DAYS ON MARKET', 220],
  ['KIND', 240], ['TYPE', 140], ['CONTRACT', 260], ['BEDS', 140],
];

const pillColors = {
  Active: '#4b8cf6',
  Listed: '#4b8cf6',
  Condo: '#3a7bd5',
  'Multi Family': '#20704b',
  Apartment: '#223f6b',
  House: '#9ba49e',
  'Agreement Sent': '#f6a623',
  Offer: '#f5c440',
  Closed: '#8dc73f',
  'Owner Inquiry': '#7d8fa8',
};

const agentTones = { PR: 'amber', DW: 'amber', HS: 'mint', MA: 'mint', NE: 'mint' };

// start and length are parts of the 408-unit timeline
const listings = [
  { address: '1226 Noble Cyn', place: 'Boerne · $2,437', agent: 'PR', status: 'Active', time: 'May 4 – Se…', start: 38, length: 168, late: true, days: 155, kind: 'Condo', type: 'Rent', contract: 'Listed', beds: 5 },
  { address: '611 Bowen Dr', place: 'San Antonio · $1,240', agent: 'HS', status: 'Active', time: 'May 21 – Dec 4', start: 58, length: 234, days: 138, kind: 'Multi Family', type: 'Rent', contract: 'Pending', beds: 4 },
  { address: '443 Irvington Dr', place: 'Helotes · $658,435', agent: 'PR', status: 'Pending', time: 'Apr 3 – Sep 19', start: 2, length: 200, late: true, days: 186, kind: 'Apartment', type: 'Buy', contract: 'Agreement Sent', beds: 4 },
  { address: '9413 Choctaw Trl', place: 'Boerne · $229,383', agent: 'MA', status: 'Active', time: 'May 27 – …', start: 66, length: 164, days: 132, kind: 'House', type: 'Buy', contract: 'Agreement Sent', beds: 4 },
  { address: '6018 Noble Cyn', place: 'Converse · $180,888', agent: 'NE', status: 'Active', time: 'Jul 29 – Jan 26', start: 140, length: 214, days: 69, kind: 'Condo', type: 'Buy', contract: 'Pending', beds: 3 },
  { address: '7670 Soothing Crk', place: 'Schertz · $2,689', agent: null, status: 'Active', time: 'Jul 16 – De…', start: 124, length: 170, days: 82, kind: 'Apartment', type: 'Rent', contract: 'Offer', beds: 5 },
  { address: '9536 Noble Cyn', place: 'Helotes · $2,462', agent: 'MA', status: 'Active', time: 'Apr 2 – Oct 15', start: 0, length: 232, days: 187, kind: 'Condo', type: 'Rent', contract: 'Closed', beds: 5 },
  { address: '3843 Blue Canal', place: 'Schertz · $679,876', agent: 'DW', status: 'Active', time: 'May 12 – Oc…', start: 48, length: 178, days: 147, kind: 'Apartment', type: 'Buy', contract: 'Offer', beds: 4 },
  { address: '492 County Road 467', place: 'Boerne · $2,387', agent: 'DW', status: 'Active', time: 'Jun 1 – Oct …', start: 72, length: 172, days: 127, kind: 'House', type: 'Rent', contract: 'Owner Inquiry', beds: 4 },
  { address: '5039 Noble Cyn', place: 'Boerne · $1,550', agent: 'NE', status: 'Active', time: 'Jun 11 – …', start: 84, length: 146, days: 117, kind: 'House', type: 'Rent', contract: 'Closed', beds: 2 },
];

const ListingRow = ({ listing }) => (
  <tr>
    <Cell $left>
      <Address href="#listing">{listing.address}</Address>
      <Place>{listing.place}</Place>
    </Cell>
    <Cell>{listing.agent ? <Avatar $tone={agentTones[listing.agent]}>{listing.agent}</Avatar> : <Nobody>—</Nobody>}</Cell>
    <Cell>
      <Pill $color={listing.status === 'Pending' ? '#f6a623' : pillColors[listing.status]}>{listing.status}</Pill>
    </Cell>
    <Cell>
      <Track>
        <Span
          $late={listing.late}
          $short={listing.time.endsWith('…')}
          style={{ marginLeft: `${(listing.start / 408) * 100}%`, width: `${(listing.length / 408) * 100}%` }}
        >
          {listing.time}
        </Span>
      </Track>
    </Cell>
    <Cell $tabular>{listing.days} days</Cell>
    <Cell>
      <Pill $color={pillColors[listing.kind]}>{listing.kind}</Pill>
    </Cell>
    <Cell><CellLink href="#type">{listing.type}</CellLink></Cell>
    <Cell>
      <Pill $color={listing.contract === 'Pending' ? '#e93f8a' : pillColors[listing.contract]} $dark={listing.contract === 'Offer'}>{listing.contract}</Pill>
    </Cell>
    <Cell $tabular><CellLink href="#beds">{listing.beds}</CellLink></Cell>
  </tr>
);

const App = () => {
  const [view, setView] = useState('Board');
  const [filter, setFilter] = useState('All');

  return (
    <Shell>
      <GlobalStyle />
      <Sidebar>
        <Brand href="#home">
          <Logo />
          <BrandName>
            Facreo
            <BrandSub>CRM</BrandSub>
          </BrandName>
        </Brand>
        <Nav>
          {navGroups.map((group, index) => (
            <React.Fragment key={index}>
              {group.label && <NavLabel>{group.label}</NavLabel>}
              {group.items.map(([icon, label]) => (
                <NavItem key={label} href="#nav" $active={label === 'Listings'}>
                  <Icon name={icon} />
                  {label}
                </NavItem>
              ))}
            </React.Fragment>
          ))}
        </Nav>
        <Collapse>
          <svg width="22" height="22" viewBox="0 0 22 22" fill="none" stroke="currentColor" strokeWidth="2.4" strokeLinecap="round" strokeLinejoin="round"><path d="M15 3L7 11L15 19" /></svg>
          Collapse
        </Collapse>
      </Sidebar>
      <Main>
        <TopBar>
          <SearchBox>
            <svg width="28" height="28" viewBox="0 0 28 28" fill="none" stroke="currentColor" strokeWidth="2.4" strokeLinecap="round"><circle cx="12.5" cy="12.5" r="9.5" /><path d="M19.5 19.5L24 24" /></svg>
            <SearchInput type="search" placeholder="Search people..." aria-label="Search people" />
          </SearchBox>
          <UserArea>
            <BellButton aria-label="Notifications">
              <svg width="34" height="34" viewBox="0 0 34 34" fill="none" stroke="currentColor" strokeWidth="2.4" strokeLinecap="round" strokeLinejoin="round"><path d="M4 24C7 21 7 18 7 13A9 10 0 0 1 25 13C25 18 25 21 28 24ZM13.5 30.5H18.5" /></svg>
              <BellCount>1</BellCount>
            </BellButton>
            <Avatar $tone="amber">DW</Avatar>
            <UserName>Dana</UserName>
          </UserArea>
        </TopBar>
        <Page>
          <PageHead>
            <div>
              <Title>Listings</Title>
              <Summary>40 listings · 36 with an agent · 1,393 inquiries</Summary>
              <FinePrint>
                Imported or added by hand — Facreo does not read your MLS, so prices and statuses are as current as the last time someone updated them here.
              </FinePrint>
            </div>
            <Filters>
              <Toggle>
                {['Board', 'Table'].map((name) => (
                  <ToggleButton key={name} $on={view === name} onClick={() => setView(name)}>{name}</ToggleButton>
                ))}
              </Toggle>
              <FilterButton $on={filter === 'All'} onClick={() => setFilter('All')}>All</FilterButton>
              <FilterButton $on={filter === 'Unassigned'} onClick={() => setFilter('Unassigned')}>
                Unassigned <FilterCount>4</FilterCount>
              </FilterButton>
            </Filters>
          </PageHead>
          <MapPanel />
          <TableCard>
            <Table>
              <colgroup>
                {columns.map(([name, width]) => <Col key={name} $width={width} />)}
              </colgroup>
              <thead>
                <tr>
                  {columns.map(([name]) => <HeadCell key={name} $left={name === 'LISTING'}>{name}</HeadCell>)}
                </tr>
              </thead>
              <tbody>
                {listings.map((listing) => <ListingRow key={listing.address} listing={listing} />)}
              </tbody>
            </Table>
          </TableCard>
        </Page>
      </Main>
    </Shell>
  );
};

export default App;
